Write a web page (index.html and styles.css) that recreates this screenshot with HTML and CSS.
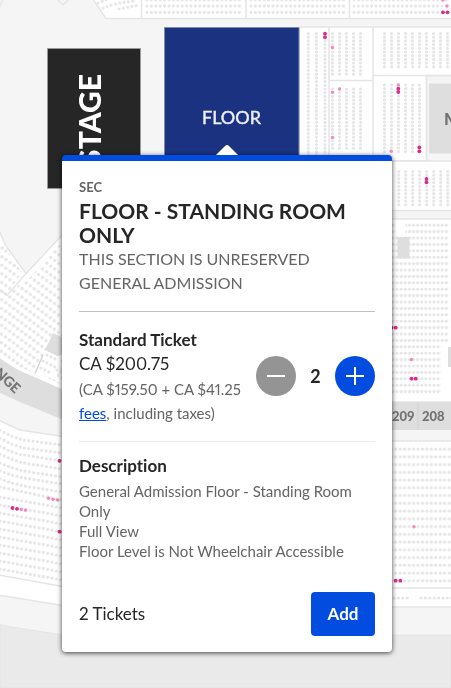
FILE: index.html
```html
<!DOCTYPE html>
<html lang="en">
<head>
<meta charset="utf-8">
<meta name="viewport" content="width=device-width, initial-scale=1">
<title>Floor - Standing Room Only</title>
<link rel="stylesheet" href="styles.css">
</head>
<body>
<svg class="map" viewBox="0 0 451 688" preserveAspectRatio="xMinYMin slice" aria-label="Seat map">
  <defs>
    <pattern id="seats-lower" x="393.5" y="445" width="4.45" height="7.75" patternUnits="userSpaceOnUse"><circle class="dot" cx="2.2" cy="4" r="1.6"/></pattern>
    <pattern id="seats-mid" x="391" y="222" width="4.1" height="6.4" patternUnits="userSpaceOnUse"><circle class="dot" cx="2" cy="3.2" r="1.6"/></pattern>
    <pattern id="seats-left" width="5" height="7" patternUnits="userSpaceOnUse" patternTransform="rotate(36)"><circle class="dot" cx="2.5" cy="3.5" r="1.7"/></pattern>
  </defs>

  <!-- outer ground -->
  <path class="ground" d="M0 625L62 635H451V688H0Z"/>

  <!-- upper stand -->
  <path class="section" d="M91-4L106 18.5H455V-4Z"/>
  <path class="edge" d="M141.5 0V18M246 0V18M349.5 0V18M57-1l6 6 6-6M3-1L-1 8"/>
  <path class="row" d="M98 3l12-5M103 8Q118 2 137 1M119 9l20-4M147 0H243M147 6H243M147 12.3H243M251 6H346M251 12.3H346M354 6H449M354 12.3H449M251 0H346M354 0H449"/>

  <!-- side stand -->
  <path class="section" d="M299 27H455V75.500H426.500V161H299Z"/>
  <path class="edge" d="M329 27V161M373 27V161M329 80.500H373M373 75.500H455M426.500 75V161"/>
  <path class="col" d="M308.300 33.500V156M316.500 33.500V156M325 33.500V156M332.500 33.500V75M339.500 33.500V75M346.500 33.500V75M353.500 33.500V75M360.500 33.500V75M332.500 89V151M339.500 89V151M346.500 89V151M353.500 89V151M360.500 89V151M384.500 33.500V67M391.500 33.500V67M398.500 33.500V67M405.500 33.500V67M412.500 33.500V67M419.500 33.500V67M426.500 33.500V67M433.500 33.500V67M440.500 33.500V67M447.500 33.500V67M384.500 85V153M391.500 85V153M398.500 85V153M405.500 85V153M412.500 85V153M419.500 85V153"/>
  <path class="block" d="M429 83.500H455V153.500H429Z"/>
  <text class="block-label" x="444" y="125">MIX</text>
  <path class="section" d="M370 161H455V210.500H370Z"/>
  <path class="col" d="M398.700 171.500V205M405.700 171.500V205M412.700 171.500V205M419.700 171.500V205M426.700 171.500V205M433.700 171.500V205M440.700 171.500V205M447.700 171.500V205"/>
  <path class="section" d="M370 219H455V402H370Z"/>
  <path fill="url(#seats-mid)" d="M391 222H449V344H441V395H391Z"/>
  <path class="blank" d="M396 222h9.500v12.500H396z"/>
  <path class="block" d="M397.500 237H409.500V258.500H397.500ZM448 347h5v20h-5z"/>

  <!-- lower right stand -->
  <path class="block" d="M370 402H455V430H370Z"/>
  <path class="seam" d="M418 402V430"/>
  <text class="section-label" x="392" y="420.500">209</text>
  <text class="section-label" x="422" y="420.500">208</text>
  <path class="section" d="M370 441H455V607H370Z"/>
  <path class="edge" d="M370 588H455"/>
  <path fill="url(#seats-lower)" d="M389 445H455V584.500H389Z"/>
  <path class="row" d="M394 598H410M421 598H455"/>

  <!-- left stand -->
  <path class="section" d="M-2 228L6 246 26 273.500 66 231V392L14 369-2 358Z"/>
  <path fill="url(#seats-left)" d="M0 240L22 272 9 292 30 277 62 242V385L38 374 16 366 0 355Z"/>
  <path class="edge" d="M26 273.500L7 295.500-2 288"/>
  <path class="block" d="M-2 357Q14 368 20 371L66 391V421L20 402-2 392Z"/>
  <path class="blank" d="M45 350L36 373 56 380 62 356Z"/>
  <path class="row" d="M47 355l8 4M43 361l12 6M41 368l10 5M57 370l6 3"/>
  <path class="seam" d="M43 355L35 373.500"/>
  <path class="block" d="M53 333L66 339V354L57 356 45 350Z"/>
  <text class="gate-label" text-anchor="end" transform="translate(15 394) rotate(43)">LOUNGE</text>

  <!-- lower left stand -->
  <path class="section" d="M-2 420L20 430 66 437V606L-2 595Z"/>
  <path class="edge" d="M-2 575L66 587"/>
  <path class="row" d="M0 430q14 8 24 10l38 5M0 438q14 8 24 10l38 5M0 446q14 8 24 9l38 6M0 454q14 7 24 9l38 6M0 463q14 6 24 8l38 6M0 471q14 5 24 7l38 6M0 479q14 5 24 7l38 6M0 487l62 13M0 497l62 11M0 505l62 11M0 513l62 11M0 521l62 11M0 529l62 11M0 537l62 11M0 545l62 11M0 553l62 11M0 561l62 11M0 569l62 11"/>

  <!-- seats on sale -->
  <g class="sale">
    <circle cx="443" cy="12.300" r="1.900"/><circle cx="447.500" cy="12.300" r="1.900"/><circle cx="325" cy="33.700" r="1.900"/><circle cx="325" cy="37.200" r="1.900"/>
    <circle cx="398.300" cy="88.700" r="1.900"/><circle cx="398.300" cy="92" r="1.900"/><circle cx="419.300" cy="147.500" r="1.900"/><circle cx="419.300" cy="151.300" r="1.900"/>
    <circle cx="426.500" cy="179" r="1.900"/><circle cx="426.500" cy="182.300" r="1.900"/><circle cx="391.500" cy="327.700" r="1.900"/><circle cx="395.700" cy="327.700" r="1.900"/>
    <circle cx="411.500" cy="378.700" r="1.900"/><circle cx="415.700" cy="378.700" r="1.900"/><circle cx="395.700" cy="580.700" r="1.900"/><circle cx="400.300" cy="580.700" r="1.900"/>
    <circle cx="59.500" cy="460.800" r="1.900"/><circle cx="12.500" cy="508" r="1.900"/><circle cx="17" cy="508.800" r="1.900"/><circle cx="59.500" cy="531.700" r="1.900"/>
  </g>
  <g class="resale">
    <circle cx="447" cy="6" r="1.700"/><circle cx="443" cy="0" r="1.700"/><circle cx="332.500" cy="47.500" r="1.700"/><circle cx="332.500" cy="92.200" r="1.700"/><circle cx="339.500" cy="89" r="1.700"/>
    <circle cx="332.500" cy="137.500" r="1.700"/><circle cx="398.300" cy="85" r="1.700"/><circle cx="391.300" cy="151.300" r="1.700"/><circle cx="411.500" cy="359.500" r="1.700"/><circle cx="414" cy="526.700" r="1.700"/>
    <circle cx="48.500" cy="498.300" r="1.700"/><circle cx="53" cy="499.200" r="1.700"/><circle cx="57.500" cy="500" r="1.700"/><circle cx="21.300" cy="509.500" r="1.700"/><circle cx="25.500" cy="510.300" r="1.700"/>
  </g>

  <path class="stage" d="M47.500 48.500H140.500V188.500H47.500Z"/>
  <text class="stage-label" text-anchor="end" transform="translate(101 74) rotate(-90)">STAGE</text>
  <path class="floor" d="M164.500 27.500H299V200H164.500Z"/>
  <text class="floor-label" text-anchor="middle" x="231.500" y="124">FLOOR</text>
</svg>

<main class="card">
  <svg class="pointer" viewBox="0 0 22 10" aria-hidden="true"><path d="M0 10L9 1Q11-1 13 1L22 10Z"/></svg>
  <header class="head">
    <p class="eyebrow">SEC</p>
    <h1 class="title">FLOOR - STANDING ROOM ONLY</h1>
    <p class="subtitle">THIS SECTION IS UNRESERVED GENERAL ADMISSION</p>
  </header>
  <section class="ticket">
    <div class="price">
      <h2 class="heading">Standard Ticket</h2>
      <p class="total">CA $200.75</p>
      <p class="breakdown">(CA $159.50 + CA $41.25 <a href="#fees">fees</a>, including taxes)</p>
    </div>
    <div class="stepper">
      <button class="step step-off" type="button" aria-label="Remove one ticket"><svg viewBox="0 0 40 40"><path d="M11 20H29"/></svg></button>
      <output class="count">2</output>
      <button class="step" type="button" aria-label="Add one ticket"><svg viewBox="0 0 40 40"><path d="M11 20H29M20 11V29"/></svg></button>
    </div>
  </section>
  <section class="description">
    <h2 class="heading">Description</h2>
    <p>General Admission Floor - Standing Room Only</p>
    <p>Full View</p>
    <p>Floor Level is Not Wheelchair Accessible</p>
  </section>
  <footer class="foot">
    <span>2 Tickets</span>
    <button class="add" type="button">Add</button>
  </footer>
</main>
</body>
</html>
```
FILE: styles.css
```css
* { box-sizing: border-box; }

body {
  margin: 0;
  min-height: 100vh;
  display: flow-root;
  background: #f5f5f5;
  color: #262626;
  font-family: Lato, "Open Sans", sans-serif;
  font-size: 16px;
  line-height: 24px;
  font-variant-ligatures: none;
  font-variant-numeric: proportional-nums;
}

h1, h2, p { margin: 0; }

/* Seat map */
.map {
  position: fixed;
  inset: 0;
  width: 100%;
  height: 100%;
}
.ground { fill: #eaeaea; stroke: #e4e4e4; }
.section { fill: #fff; stroke: #e5e5e5; stroke-width: 1.5; }
.edge { fill: none; stroke: #e5e5e5; stroke-width: 1.5; }
.seam { fill: none; stroke: #d6d6d6; stroke-width: 1.5; }
.blank { fill: #fff; }
.block { fill: #dedede; }
.dot { fill: #e6e6e6; }
.row, .col { fill: none; stroke: #e6e6e6; stroke-width: 3.2; stroke-linecap: round; }
.row { stroke-dasharray: 0 4.4; }
.col { stroke-dasharray: 0 3.7; }
.sale { fill: #da2c8c; }
.resale { fill: #f08cc0; }
.stage { fill: #262626; stroke: #999; }
.floor { fill: #1a3280; stroke: #7d8ab5; }
.stage-label { fill: #fff; font-size: 30px; font-weight: 900; }
.floor-label { fill: #eef0f8; stroke: #eef0f8; stroke-width: 0.4; font-size: 18px; }
.section-label { fill: #737373; font-size: 13px; font-weight: 900; font-variant-numeric: tabular-nums; }
.gate-label { fill: #737373; font-size: 14px; font-weight: 900; }
.block-label { fill: #737373; font-size: 17px; font-weight: 900; }

/* Ticket card */
.card {
  position: relative;
  margin: 155px 59px 0 62px;
  padding: 18px 17px 16px;
  border-top: 6px solid #024ddf;
  border-radius: 4px;
  background: #fff;
  box-shadow: 0 1px 5px rgba(0, 0, 0, 0.75);
}
.pointer {
  position: absolute;
  top: -16px;
  left: 50%;
  width: 22px;
  height: 10px;
  margin-left: -11px;
  fill: #fff;
}
.head {
  padding-bottom: 16px;
  border-bottom: 1px solid #bfbfbf;
}
.eyebrow {
  margin-bottom: 4px;
  color: #646464;
  font-size: 13px;
  font-weight: 700;
  line-height: 16px;
}
.title { font-size: 21px; font-weight: 700; line-height: 24px; }
.subtitle { color: #646464; font-size: 16px; }
.heading { font-size: 17px; font-weight: 700; line-height: 24px; }
.ticket {
  display: flex;
  justify-content: space-between;
  padding: 16px 0;
  border-bottom: 1px solid #ebebeb;
}
.price { flex: 1; min-width: 0; }
.total { font-size: 17px; }
.breakdown { margin-top: 1px; color: #646464; font-size: 15px; }
.breakdown a { color: #024ddf; }
.stepper {
  display: flex;
  align-items: center;
  height: 40px;
  margin-top: 28px;
}
.step {
  width: 40px;
  height: 40px;
  padding: 0;
  border: 0;
  border-radius: 50%;
  background: #024ddf;
}
.step-off { background: #949494; }
.step svg { display: block; fill: none; stroke: #fff; stroke-width: 2; }
.count { width: 39px; text-align: center; font-size: 18px; font-weight: 700; }
.description { padding: 12px 0 31px; }
.description .heading { margin-bottom: 3px; }
.description p { color: #646464; font-size: 15px; line-height: 20px; }
.foot {
  display: flex;
  align-items: center;
  justify-content: space-between;
  font-size: 17px;
}
.add {
  width: 64px;
  height: 44px;
  border: 0;
  border-radius: 4px;
  background: #024ddf;
  color: #fff;
  font: inherit;
  font-weight: 700;
}
```
